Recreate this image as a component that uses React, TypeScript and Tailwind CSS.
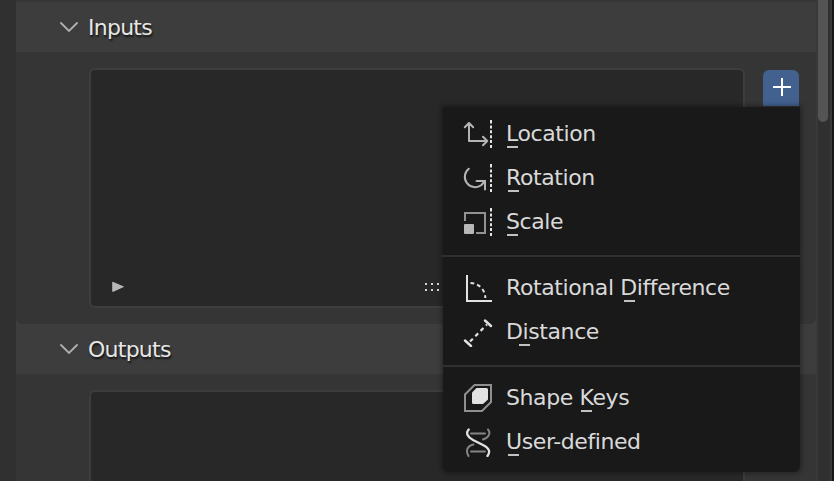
import type { ReactNode } from "react";

type Item = { label: string; mark: string; icon: ReactNode };

const Dashes = () => (
  <path d="M29 3V31" stroke="#e2e2e2" strokeWidth="2" strokeDasharray="3.5 1.9 3 1.9 3 1.9 3 1.9 3 1.9 3.5 2" />
);

const Icon = ({ children }: { children: ReactNode }) => (
  <svg width="32" height="32" viewBox="0 0 32 32" fill="none" className="shrink-0">
    {children}
  </svg>
);

const LocationIcon = (
  <Icon>
    <path d="M7 6V24H25M2.8 10.3L7 6L11.2 10.3M21 19.8L25.3 24L21 28.2" stroke="#b4b4b4" strokeWidth="2" strokeLinecap="round" strokeLinejoin="round" />
    <Dashes />
  </Icon>
);
const RotationIcon = (
  <Icon>
    <path d="M6.8 7.7A9.8 9.8 0 1 0 19.5 24L23 20M14.5 20H23V28.5" stroke="#b4b4b4" strokeWidth="2" strokeLinecap="round" />
    <Dashes />
  </Icon>
);
const ScaleIcon = (
  <Icon>
    <path d="M3 16V8H23V28H14" stroke="#929292" strokeWidth="2" />
    <rect x="2" y="19" width="10" height="10" rx="1" fill="#b8b8b8" />
    <Dashes />
  </Icon>
);
const AngleIcon = (
  <Icon>
    <path d="M5 5V30H29" stroke="#e2e2e2" strokeWidth="2" strokeLinecap="square" />
    <path d="M8.5 12A15 15 0 0 1 23.3 27" stroke="#e2e2e2" strokeWidth="2" strokeDasharray="3.8 3" />
  </Icon>
);
const DistanceIcon = (
  <Icon>
    <path d="M3 25.5L9 31M23 5.5L29 11" stroke="#e2e2e2" strokeWidth="2.4" strokeLinecap="round" />
    <path d="M8 26.5L25 9.5" stroke="#e2e2e2" strokeWidth="2.2" strokeDasharray="4 3.5" />
  </Icon>
);
const ShapeKeysIcon = (
  <Icon>
    <path d="M12.5 4H29V21L20 30H3V13.5Z" stroke="#8f8f8f" strokeWidth="2" />
    <path d="M14.5 7H24.5Q26 7 26 8.5V18.5L21 23H11.5Q10 23 10 21.5V11.5Z" fill="#e2e2e2" />
  </Icon>
);
const HelixIcon = (
  <Icon>
    <path d="M9 8.5H23M9 26.5H23M26 4.5C29 8 27 12.5 21 14.5M11.5 19.5C5 21 3.5 26 6.5 31" stroke="#858585" strokeWidth="2" strokeLinecap="round" />
    <path d="M6.7 4.5C3.5 8 5.5 12 11 15L21 20C27.5 23 28.5 27 25.5 31" stroke="#e2e2e2" strokeWidth="2.3" strokeLinecap="round" />
  </Icon>
);

const groups: Item[][] = [
  [
    { label: "Location", mark: "left-[1px]", icon: LocationIcon },
    { label: "Rotation", mark: "left-[2px]", icon: RotationIcon },
    { label: "Scale", mark: "left-[1px]", icon: ScaleIcon },
  ],
  [
    { label: "Rotational Difference", mark: "left-[118px]", icon: AngleIcon },
    { label: "Distance", mark: "left-[13px]", icon: DistanceIcon },
  ],
  [
    { label: "Shape Keys", mark: "left-[75px]", icon: ShapeKeysIcon },
    { label: "User-defined", mark: "left-[2px]", icon: HelixIcon },
  ],
];

function Menu() {
  return (
    <div className="absolute left-[443px] top-[107px] h-[365px] w-[357px] rounded-b-md bg-[#191919] pt-1 shadow-[0_0_4px_2px_rgba(0,0,0,0.3)]">
      {groups.map((items, g) => (
        <div key={g} className={g === 0 ? "" : "-ml-[2px] -mr-px mt-3 border-t-2 border-[#303030] pl-[2px] pt-2"}>
          {items.map((item) => (
            <div key={item.label} className="flex h-11 items-center pl-[19px]">
              {item.icon}
              <span className="relative ml-3 whitespace-pre pt-[2px] leading-[30px] tracking-[-0.4px]">
                {item.label}
                <span className={`absolute top-[29px] h-[2px] w-[11px] bg-[#c2c2c2] ${item.mark}`} />
              </span>
            </div>
          ))}
        </div>
      ))}
    </div>
  );
}

function Header({ title }: { title: string }) {
  return (
    <div className="flex h-[50px] items-center bg-[#3d3d3d] pl-11 text-[#e6e6e6]">
      <svg width="18" height="12" viewBox="0 0 18 12" fill="none" className="shrink-0">
        <path d="M1 2L9 10L17 2" stroke="#b0b0b0" strokeWidth="1.8" strokeLinecap="round" />
      </svg>
      <span className="ml-[10px] tracking-[-0.75px] [text-shadow:1px_2px_2px_rgba(0,0,0,0.7)]">{title}</span>
    </div>
  );
}

export default function App() {
  return (
    <div className="relative flex h-[481px] w-[834px] overflow-hidden bg-[#303030] font-['DejaVu_Sans',sans-serif] text-[22px] text-[#d9d9d9]">
      <main className="ml-4 w-[800px] shrink-0 bg-[#3d3d3d]">
        <div className="h-[2px] rounded-b-md bg-[#353535]" />
        <Header title="Inputs" />
        <section className="flex h-[272px] items-start gap-[18px] rounded-b-md bg-[#353535] pl-[73px] pt-4">
          <div className="flex h-[240px] w-[656px] items-end rounded-md border-2 border-[#3d3d3d] bg-[#282828] pb-3 pl-[21px]">
            <svg width="14" height="14" viewBox="0 0 14 14">
              <path d="M0.2 2.6Q0.2 1.4 1.4 1.9L12.3 6.8L1.4 11.7Q0.2 12.2 0.2 11Z" fill="#b8b8b8" />
            </svg>
            <div className="mb-[3px] ml-[299px] grid grid-cols-[repeat(5,2px)] gap-1">
              {Array.from({ length: 10 }, (_, i) => (
                <i key={i} className="h-[2px] w-[2px] bg-[#d6d6d6]" />
              ))}
            </div>
          </div>
          <button className="mt-[2px] flex h-9 w-9 items-center justify-center rounded-t-md bg-[#43618f] pb-[2px] pl-[2px]">
            <svg width="20" height="20" viewBox="0 0 20 20" className="shrink-0">
              <path d="M10 1V19M1 10H19" stroke="#fff" strokeWidth="2" />
            </svg>
          </button>
        </section>
        <Header title="Outputs" />
        <section className="h-[107px] bg-[#353535] pl-[73px] pt-4">
          <div className="h-[120px] w-[656px] rounded-md border-2 border-[#3d3d3d] bg-[#282828]" />
        </section>
      </main>
      <aside className="flex w-[18px] justify-between border-r-2 border-[#161616] bg-[#393939]">
        <div className="ml-[2px] h-full w-3 bg-[#303030]">
          <div className="h-[122px] w-[10px] rounded-b-[5px] bg-[#545454]" />
        </div>
      </aside>
      <Menu />
    </div>
  );
}
